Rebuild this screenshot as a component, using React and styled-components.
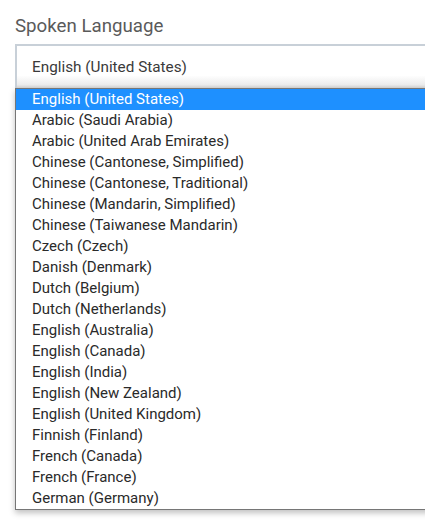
import styled, { createGlobalStyle } from "styled-components";

const languages = [
  "English (United States)",
  "Arabic (Saudi Arabia)",
  "Arabic (United Arab Emirates)",
  "Chinese (Cantonese, Simplified)",
  "Chinese (Cantonese, Traditional)",
  "Chinese (Mandarin, Simplified)",
  "Chinese (Taiwanese Mandarin)",
  "Czech (Czech)",
  "Danish (Denmark)",
  "Dutch (Belgium)",
  "Dutch (Netherlands)",
  "English (Australia)",
  "English (Canada)",
  "English (India)",
  "English (New Zealand)",
  "English (United Kingdom)",
  "Finnish (Finland)",
  "French (Canada)",
  "French (France)",
  "German (Germany)",
];

const GlobalStyle = createGlobalStyle`
  html, body {
    margin: 0;
    padding: 0;
    background: #fff;
  }
  body {
    font-family: Roboto, "Liberation Sans", sans-serif;
  }
`;

const App = () => {
  const selected = 0;

  return (
    <>
      <GlobalStyle />
      <Page>
        <Container>
          <Label>Spoken Language</Label>
          <Field>
            <SelectBox>
              <Value>{languages[selected]}</Value>
            </SelectBox>
            <Dropdown>
              {languages.map((lang, i) => (
                <Option key={lang} active={i === selected}>
                  {lang}
                </Option>
              ))}
            </Dropdown>
          </Field>
        </Container>
      </Page>
    </>
  );
};

const Page = styled.div`
  width: 100%;
  overflow: hidden;
  padding-bottom: 12px;
`;

const Container = styled.div`
  padding: 15px 0 0 15px;
  width: 480px;
`;

const Label = styled.div`
  font-size: 18.7px;
  line-height: 22px;
  color: #5a5a5a;
  margin-bottom: 7px;
`;

const Field = styled.div`
  display: flex;
  flex-direction: column;
`;

const SelectBox = styled.div`
  height: 44px;
  box-sizing: border-box;
  border: 2px solid #c8d0d8;
  border-bottom: none;
  background: linear-gradient(to bottom, #fff 0%, #fff 70%, #ececec 92%, #d4d4d4 100%);
  display: flex;
  align-items: center;
  padding-left: 15px;
`;

const Value = styled.span`
  font-size: 15.3px;
  color: #3a3a3a;
`;

const Dropdown = styled.div`
  border: 1px solid #767676;
  background: #fff;
  box-shadow: 0 3px 6px rgba(0, 0, 0, 0.25);
`;

const Option = styled.div`
  height: 21px;
  line-height: 21px;
  padding-left: 16px;
  font-size: 15px;
  color: ${(props) => (props.active ? "#fff" : "#2a2a2a")};
  background: ${(props) => (props.active ? "#1e90ff" : "transparent")};
  white-space: nowrap;
`;

export default App;
